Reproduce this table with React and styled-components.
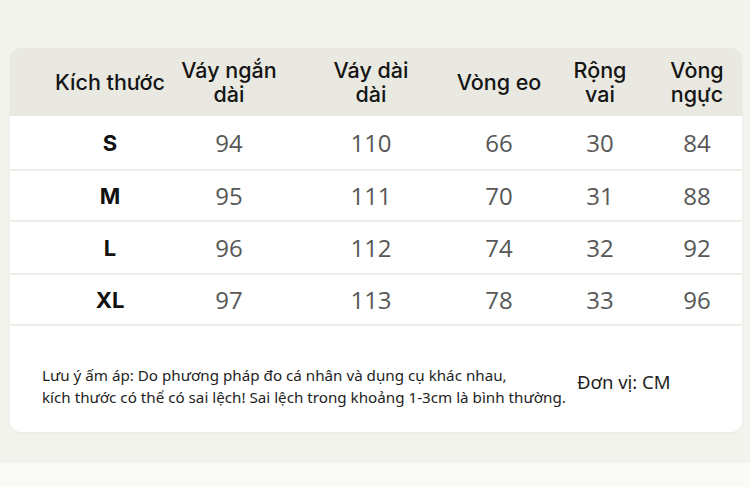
import React from "react";
import styled, { createGlobalStyle } from "styled-components";

const GlobalStyle = createGlobalStyle`
  html, body {
    margin: 0;
    padding: 0;
    background: #fafaf7;
  }
`;

const Page = styled.div`
  height: 463px;
  background: #f3f3ee;
  padding: 48px 8px 0 10px;
  box-sizing: border-box;
`;

const Card = styled.div`
  width: 732px;
  height: 384px;
  background: #ffffff;
  border-radius: 11px;
  box-shadow: 0 1px 3px rgba(0, 0, 0, 0.04);
  overflow: hidden;
  display: flex;
  flex-direction: column;
`;

const Row = styled.div`
  display: grid;
  grid-template-columns: 120px 118px 166px 90px 112px 82px;
  padding-left: 40px;
  align-items: center;
  height: ${(p) => p.$h}px;
  background: ${(p) => (p.$head ? "#e9e9e2" : "#ffffff")};
  border-bottom: ${(p) => (p.$head ? "none" : "2px solid #eeeee9")};
  box-sizing: border-box;
`;

const HeadCell = styled.div`
  text-align: center;
  font-family: Inter, "Noto Sans", sans-serif;
  font-weight: 500;
  font-size: 21.5px;
  line-height: 24px;
  color: #151515;
  white-space: nowrap;
`;

const SizeCell = styled.div`
  text-align: center;
  font-family: Inter, "Noto Sans", sans-serif;
  font-weight: 700;
  font-size: 22px;
  color: #111111;
`;

const ValueCell = styled.div`
  text-align: center;
  font-family: "Open Sans", "Noto Sans", sans-serif;
  font-size: 24px;
  color: #575757;
`;

const Footer = styled.div`
  flex: 1;
  display: flex;
  align-items: center;
  padding: 14px 0 0 32px;
`;

const Note = styled.p`
  margin: 0;
  width: 535px;
  font-family: "Noto Sans", "Open Sans", sans-serif;
  font-size: 15.2px;
  line-height: 22px;
  color: #1e1e1e;
  white-space: nowrap;
`;

const Unit = styled.span`
  font-family: "Noto Sans", "Open Sans", sans-serif;
  font-size: 18.5px;
  color: #1e1e1e;
  margin-bottom: 10px;
`;

const headers = [
  ["Kích thước"],
  ["Váy ngắn", "dài"],
  ["Váy dài", "dài"],
  ["Vòng eo"],
  ["Rộng", "vai"],
  ["Vòng", "ngực"],
];

const rows = [
  ["S", 94, 110, 66, 30, 84],
  ["M", 95, 111, 70, 31, 88],
  ["L", 96, 112, 74, 32, 92],
  ["XL", 97, 113, 78, 33, 96],
];

const rowHeights = [55, 51, 53, 51];

const App = () => {
  return (
    <>
      <GlobalStyle />
      <Page>
        <Card>
          <Row $head $h={68}>
            {headers.map((h, i) => (
              <HeadCell key={i}>
                {h.map((line, j) => (
                  <div key={j}>{line}</div>
                ))}
              </HeadCell>
            ))}
          </Row>
          {rows.map((r, k) => (
            <Row key={r[0]} $h={rowHeights[k]}>
              <SizeCell>{r[0]}</SizeCell>
              {r.slice(1).map((v, i) => (
                <ValueCell key={i}>{v}</ValueCell>
              ))}
            </Row>
          ))}
          <Footer>
            <Note>
              Lưu ý ấm áp: Do phương pháp đo cá nhân và dụng cụ khác nhau,
              <br />
              kích thước có thể có sai lệch! Sai lệch trong khoảng 1-3cm là bình thường.
            </Note>
            <Unit>Đơn vị: CM</Unit>
          </Footer>
        </Card>
      </Page>
    </>
  );
};

export default App;
